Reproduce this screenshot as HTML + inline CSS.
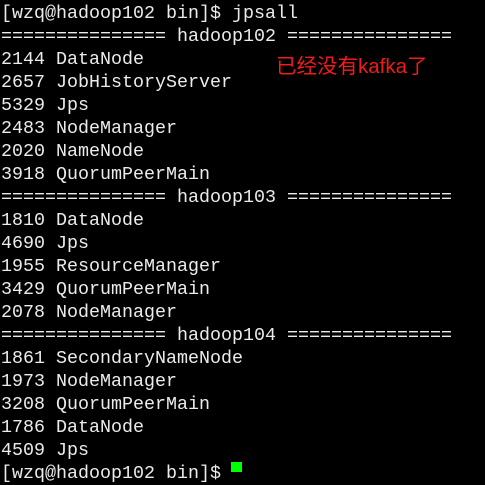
<!DOCTYPE html>
<html><head><meta charset="utf-8"><style>
html,body{margin:0;padding:0;background:#000;width:485px;height:468px;overflow:hidden}
pre{margin:0;position:absolute;left:1px;top:2px;font-family:"Liberation Mono","DejaVu Sans Mono",monospace;font-size:18.33px;line-height:23px;color:#ebebeb}
.r{position:absolute;left:276px;top:54px;color:#f21b1b;font-family:"Liberation Sans","Noto Sans CJK SC",sans-serif;font-size:20.5px;line-height:25px;white-space:nowrap}
.c{position:absolute;left:231px;top:462px;width:11px;height:10px;background:#00ff00}
</style></head><body>
<pre>[wzq@hadoop102 bin]$ jpsall
=============== hadoop102 ===============
2144 DataNode
2657 JobHistoryServer
5329 Jps
2483 NodeManager
2020 NameNode
3918 QuorumPeerMain
=============== hadoop103 ===============
1810 DataNode
4690 Jps
1955 ResourceManager
3429 QuorumPeerMain
2078 NodeManager
=============== hadoop104 ===============
1861 SecondaryNameNode
1973 NodeManager
3208 QuorumPeerMain
1786 DataNode
4509 Jps
[wzq@hadoop102 bin]$ </pre>
<div class="r">已经没有kafka了</div>
<div class="c"></div>
</body></html>
